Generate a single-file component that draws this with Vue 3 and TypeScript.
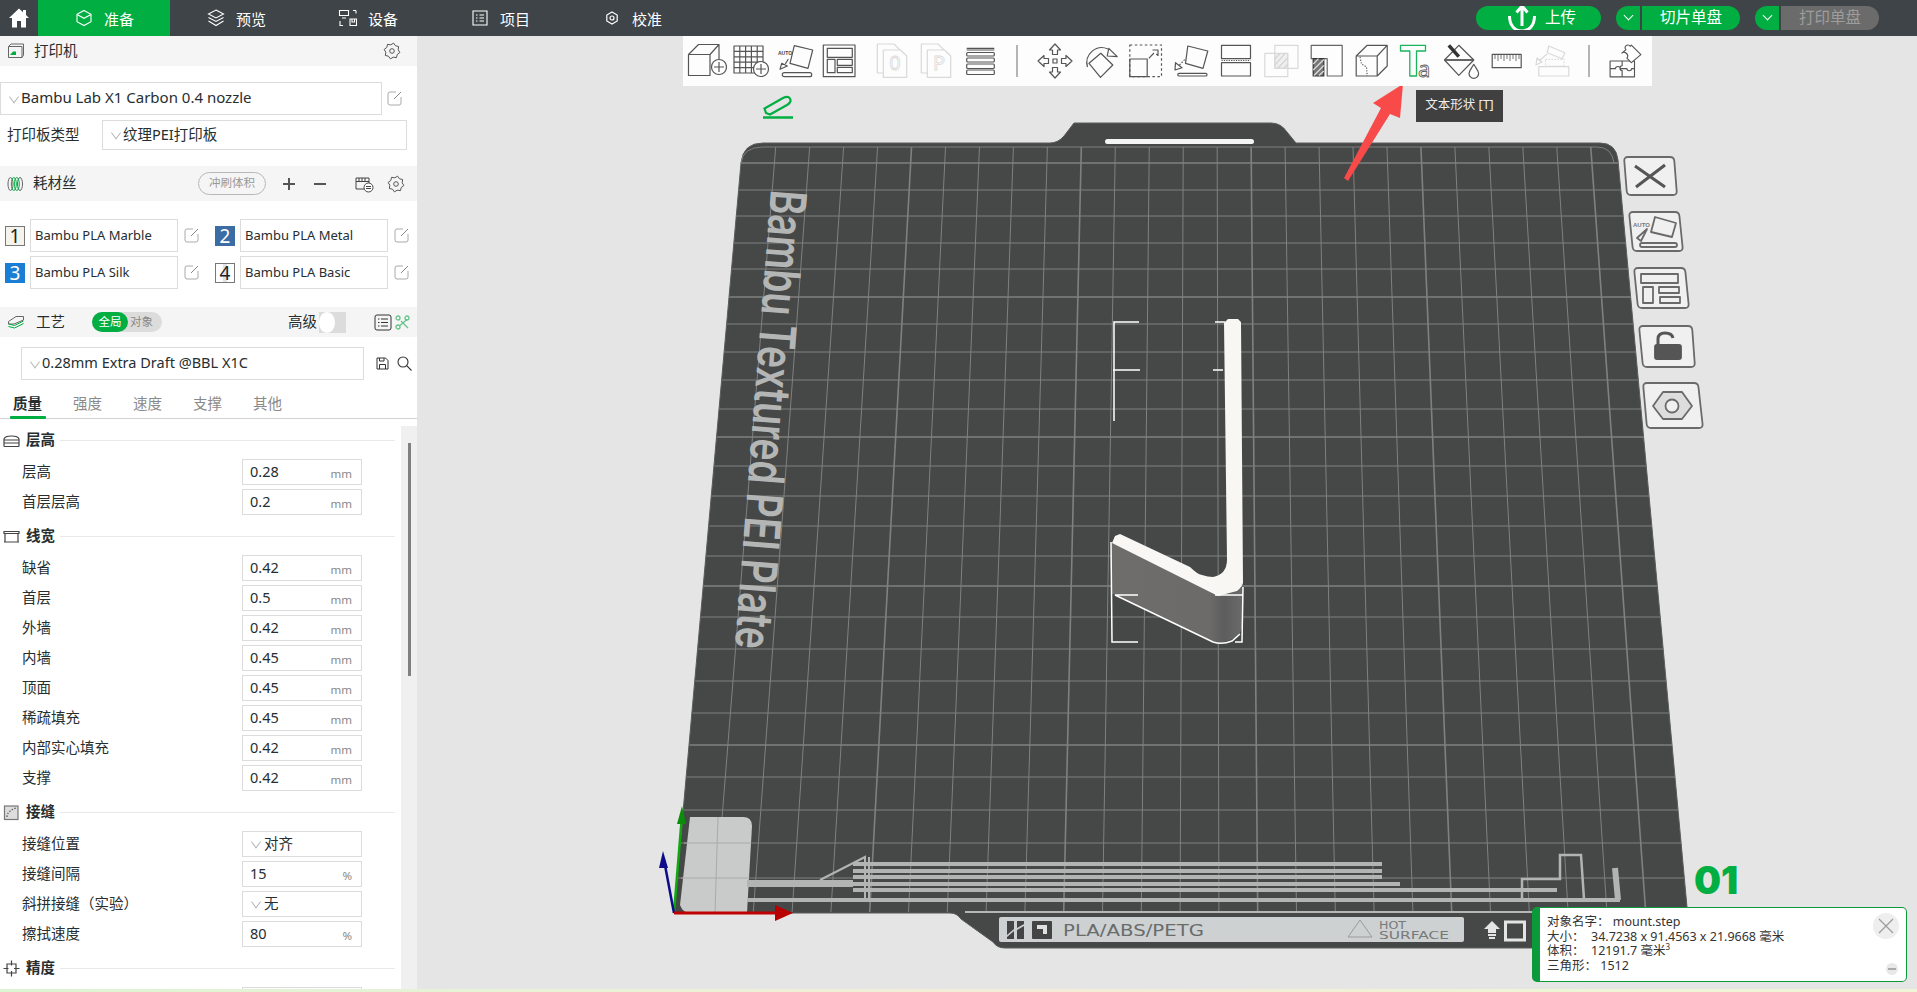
<template>
  <div class="app">
    <header class="topbar">
      <div class="home">
        <svg width="22" height="22" viewBox="0 0 22 22"><path d="M11 1.500L1 11h3v9.500h5v-6.500h4v6.500h5V11h3l-3-2.900V3h-3v2.200z" fill="#fff" /></svg>
      </div>
      <div class="nav active">
        <svg width="20" height="20" viewBox="0 0 20 20" fill="none" stroke="#fff" stroke-width="1.100"><path d="M10 2.500l7 3.800v7.400l-7 3.800-7-3.800V6.300z" /><path d="M3 6.500l7 3.800 7-3.800" /></svg>
        <span>准备</span>
      </div>
      <div class="nav">
        <svg width="20" height="20" viewBox="0 0 20 20" fill="none" stroke="#fff" stroke-width="1.100"><path d="M10 2l7.500 4-7.500 4-7.500-4z" /><path d="M2.500 9.500l7.500 4 7.500-4M2.500 13l7.500 4.500 7.500-4.500" /></svg>
        <span>预览</span>
      </div>
      <div class="nav">
        <svg width="20" height="20" viewBox="0 0 20 20" fill="none" stroke="#fff" stroke-width="1.100"><path d="M1.500 2.500h9v5h-9zM4 10h4M18 2.500h-3M18 2.500v3M2 13v4.500h3M12 11h6.500v6.500H12zM14 11v3h2.500v-3" /></svg>
        <span>设备</span>
      </div>
      <div class="nav">
        <svg width="20" height="20" viewBox="0 0 20 20" fill="none" stroke="#fff" stroke-width="1.100"><path d="M3 3h14v14H3zM6 7h1.500M9.500 7H14M6 10h1.500M9.500 10H14M6 13h1.500M9.500 13H14" /></svg>
        <span>项目</span>
      </div>
      <div class="nav">
        <svg width="20" height="20" viewBox="0 0 20 20" fill="none" stroke="#fff" stroke-width="1.200"><path d="M10 4l5.200 3v6L10 16l-5.200-3V7z" /><circle cx="10" cy="10" r="2" /></svg>
        <span>校准</span>
      </div>
      <div class="actions">
        <div class="btn upload">
          <svg width="30" height="30" viewBox="0 0 30 30" fill="none" stroke="#fff" stroke-width="3"><path d="M15 23V4M9.500 9.500L15 3l5.500 6.500" /><path d="M2.500 13c0 9 5 15 12.500 15s12.500-6 12.500-15" /></svg>
          <span>上传</span>
        </div>
        <div class="split">
          <div class="arrow"><i class="vee"></i></div>
          <div class="main">切片单盘</div>
        </div>
        <div class="split print">
          <div class="arrow"><i class="vee"></i></div>
          <div class="main off">打印单盘</div>
        </div>
      </div>
    </header>

    <div class="work">
      <aside class="side">
        <div class="head h30">
          <svg class="hicon" width="18" height="18" viewBox="0 0 18 18" fill="none" stroke="#666"><path d="M1.500 4.500h13.500v11H1.500zM1.500 4.500L4 2h12.500v11L15 15.500" /><path d="M3 13h6V9.500H6z" fill="#00ae42" stroke="none" /></svg>
          <span class="htitle">打印机</span>
          <svg class="gear right1" width="18" height="18" viewBox="0 0 18 18"><path :d="gearPath" /><circle cx="9" cy="9" r="2.300" /></svg>
        </div>
        <div class="printer">
          <div class="select wide33"><i class="chev"></i><span>Bambu Lab X1 Carbon 0.4 nozzle</span></div>
          <svg class="edit" width="15" height="15" viewBox="0 0 15 15"><path d="M9 1H3Q1 1 1 3V12Q1 14 3 14H12Q14 14 14 12V6" stroke="#aaa" /><path d="M7 8L14 1" stroke="#888" /></svg>
        </div>
        <div class="plate-type">
          <span class="ptlabel">打印板类型</span>
          <div class="select pt"><i class="chev"></i><span>纹理PEI打印板</span></div>
        </div>

        <div class="head h35">
          <svg class="hicon" width="17" height="16" viewBox="0 0 17 16" fill="none" stroke="#666"><ellipse cx="3.500" cy="8" rx="2.500" ry="6.500" /><ellipse cx="13" cy="8" rx="2.500" ry="6.500" /><ellipse cx="6.800" cy="8" rx="2.500" ry="6.500" stroke="#00ae42" /><ellipse cx="9.800" cy="8" rx="2.500" ry="6.500" stroke="#00ae42" /></svg>
          <span class="htitle">耗材丝</span>
          <span class="flush">冲刷体积</span>
          <i class="pm plus"></i>
          <i class="pm minus"></i>
          <svg class="sync" width="19" height="18" viewBox="0 0 19 18" fill="none" stroke="#444"><path d="M1 3h13v11H1zM1 6.500h13M4 3v3.500M7 3v3.500M10 3v3.500" /><circle cx="13.500" cy="12.500" r="4.500" fill="#fff" /><path d="M11 11.500h5M11 13.500h5" /></svg>
          <svg class="gear" width="18" height="18" viewBox="0 0 18 18"><path :d="gearPath" /><circle cx="9" cy="9" r="2.300" /></svg>
        </div>
        <div class="filaments">
          <div v-for="f in filaments" :key="f.id" class="filament">
            <span class="chip" :class="f.cls">{{ f.id }}</span>
            <div class="finput">{{ f.name }}</div>
            <svg class="edit" width="15" height="15" viewBox="0 0 15 15"><path d="M9 1H3Q1 1 1 3V12Q1 14 3 14H12Q14 14 14 12V6" stroke="#aaa" /><path d="M7 8L14 1" stroke="#888" /></svg>
          </div>
        </div>

        <div class="head h30 process">
          <svg class="hicon" width="18" height="18" viewBox="0 0 18 18" fill="none"><path d="M1.500 8.500L9 3.500h7.500v3.500L7 11H1.500z" stroke="#666" /><path d="M1.500 11l6 1.500L16.500 8M1.500 13.500l6 1.500L16.500 10.500" stroke="#00ae42" /></svg>
          <span class="htitle gy">工艺</span>
          <div class="seg"><span class="on">全局</span><span class="offseg">对象</span></div>
          <span class="adv">高级</span>
          <div class="toggle"><i></i></div>
          <svg class="listic" width="18" height="17" viewBox="0 0 18 17" fill="none" stroke="#333"><rect x="1" y="1" width="16" height="15" rx="2" /><path d="M4 5h1.500M7 5h7M4 8.500h1.500M7 8.500h7M4 12h1.500M7 12h7" /></svg>
          <svg class="cutic" width="15" height="15" viewBox="0 0 15 15" fill="none" stroke="#67c48a" stroke-width="1.300"><circle cx="3" cy="3" r="2" /><circle cx="12" cy="3" r="2" /><circle cx="3" cy="12" r="2" /><path d="M5 10.500l7-6M6 6l7 7" /></svg>
        </div>
        <div class="preset">
          <div class="select pre"><i class="chev"></i><span>0.28mm Extra Draft @BBL X1C</span></div>
          <svg class="save" width="13" height="13" viewBox="0 0 13 13" fill="none" stroke="#333"><path d="M1 1h8.500L12 3.500V12H1zM3.500 1v3h4.500V1M3.500 12V7.500h6V12" /></svg>
          <svg class="search" width="15" height="15" viewBox="0 0 15 15" fill="none" stroke="#333" stroke-width="1.100"><circle cx="6" cy="6" r="5" /><path d="M9.700 9.700L14.500 14.500" /></svg>
        </div>
        <div class="tabs">
          <span v-for="(t, i) in tabs" :key="t" class="tab" :class="{ cur: i === 0 }">{{ t }}</span>
        </div>

        <div class="params">
          <div class="plist">
            <section v-for="s in sections" :key="s.title" class="group">
              <div class="gtitle">
                <svg class="gicon" width="17" height="17" viewBox="0 0 17 17" fill="none" stroke="#444" stroke-width="1.200">
                  <path v-if="s.icon === 'layer'" d="M1 14.500h15M1 11h15M1 8h15M1 14.500V7c1-4 14-4 15 0v7.500" />
                  <path v-else-if="s.icon === 'width'" d="M1 3.500h15v2H1zM1 14h15M2 6v8M15 6v8" />
                  <template v-else-if="s.icon === 'seam'">
                    <rect x="1.500" y="2" width="13.500" height="13.500" fill="#ddd" stroke="#777" />
                    <path d="M4 13c0-4 3-7 9-9" stroke="#555" stroke-dasharray="1.500 1.500" />
                  </template>
                  <path v-else d="M4 4h9v9H4zM8.500 0.500v5M8.500 11v5.500M0.500 8.500h5M11 8.500h5.500" />
                </svg>
                <b>{{ s.title }}</b>
                <i class="rule"></i>
              </div>
              <div v-for="r in s.rows" :key="r.label" class="prow">
                <span class="plabel">{{ r.label }}</span>
                <div class="pbox">
                  <i v-if="r.option" class="chev small"></i>
                  <span class="pval" :class="{ opt: r.option }">{{ r.value }}</span>
                  <span v-if="r.unit" class="punit">{{ r.unit }}</span>
                </div>
              </div>
            </section>
          </div>
          <div class="track"><i></i></div>
        </div>
      </aside>

      <main class="canvas">
        <svg class="scene" width="1500" height="953" viewBox="417 36 1500 953">
          <defs>
            <linearGradient id="front" x1="0" x2="1" y1="0" y2="0">
              <stop offset="0" stop-color="#6f6d6b" />
              <stop offset="0.74" stop-color="#6d6b69" />
              <stop offset="0.86" stop-color="#5d5d5d" />
              <stop offset="1" stop-color="#6b6b6b" />
            </linearGradient>
          </defs>
          <path d="M741 163Q743 143 763 143H1050Q1058 143 1064 136L1074 123Q1079 123 1090 123H1271Q1281 123 1287 132L1296 143H1600Q1616 143 1618 160L1687 907L1690 948H1005Q997 948 993 942L961 919Q957 913 950 913H674Z" fill="#464847" stroke="#5a5c5c" />
          <path d="M741 163Q743 147 763 147H1597Q1612 147 1614 163" fill="none" stroke="#7c7e7e" />
          <rect x="1105" y="139" width="149" height="5" rx="2.500" fill="#f4f4f4" />
          <g stroke="#7f8181">
            <line v-for="l in vLines" :key="'v' + l.x1" :x1="l.x1" y1="147" :x2="l.x2" y2="912" :stroke-width="l.w" />
            <line v-for="l in hLines" :key="'h' + l.y" :x1="l.x1" :y1="l.y" :x2="l.x2" :y2="l.y" :stroke-width="l.w" />
          </g>

          <text x="771" y="189" transform="rotate(94.5 771 189)" class="bedtext" textLength="460" lengthAdjust="spacingAndGlyphs">Bambu Textured PEI Plate</text>

          <path d="M690 817H743Q752 817 752 826L747 913H690Q683 913 680 905Z" fill="#c9cbcb" />
          <path d="M684 843H751M681 878H749M718 817L715 913" stroke="#a9abab" fill="none" />

          <g fill="#b2b4b4">
            <rect x="853" y="862" width="529" height="4" />
            <rect x="853" y="869" width="529" height="4" />
            <rect x="853" y="875" width="529" height="4" />
            <rect x="853" y="882" width="547" height="4" />
            <rect x="747" y="880" width="106" height="7" />
            <rect x="853" y="888" width="704" height="4" />
            <rect x="747" y="898" width="873" height="4" />
          </g>
          <path d="M820 880L865 857V900M869 857V900" fill="none" stroke="#b2b4b4" stroke-width="2" />
          <path d="M1522 899V879H1560V855H1581L1584 899" fill="none" stroke="#b2b4b4" stroke-width="2.500" />
          <path d="M1615 868L1618 900" fill="none" stroke="#b2b4b4" stroke-width="6" />
          <line x1="965" y1="912" x2="1690" y2="912" stroke="#b5b7b7" stroke-width="2" />

          <rect x="999" y="917" width="465" height="25" rx="2" fill="#cdd1d2" />
          <path d="M1007 921h7v8l-7 6zM1007 937l7-6v8h-7zM1017 921h7v18h-7v-9l7-4v-2l-7 4z" fill="#444" />
          <rect x="1032" y="921" width="20" height="18" rx="1" fill="#444" />
          <path d="M1037 925h10v9h-4v-5h-6z" fill="#dfe1e1" />
          <text x="1063" y="936" class="strip" textLength="141" lengthAdjust="spacingAndGlyphs">PLA/ABS/PETG</text>
          <path d="M1360 920L1348 937H1372Z" fill="none" stroke="#9a9c9c" />
          <text x="1379" y="929" class="hot" textLength="27" lengthAdjust="spacingAndGlyphs">HOT</text>
          <text x="1379" y="938.500" class="hot" textLength="70" lengthAdjust="spacingAndGlyphs">SURFACE</text>
          <path d="M1492 921L1484 929H1488V933H1496V929H1500Z M1488 934h8v2h-8zM1489 937h6v2h-6z" fill="#e4e4e4" />
          <rect x="1505.500" y="922" width="19" height="18" fill="none" stroke="#e4e4e4" stroke-width="3" />

          <path d="M1111 542L1217 595L1243 587L1242 627Q1240 635 1235 638L1222 643L1213 642L1111 593Z" fill="url(#front)" />
          <path d="M1224 323L1228 319H1238L1241 322L1243 583Q1242 587 1237 591L1218 596L1112 543L1115 536L1120 534L1190 567Q1197 574 1202 575Q1208 577 1213 577Q1219 576 1223 572Q1227 567 1227 560Z" fill="#f9f7f4" />
          <g fill="none" stroke="#fff" stroke-width="1.500">
            <path d="M1139 322H1114V421M1113 370H1140M1215 322H1225M1213 370H1223" />
            <path d="M1111 542L1112 642H1138M1138 595H1115L1213 642Q1222 645 1232 641L1240 634M1215 595H1243M1243 587L1242 642H1235" />
          </g>

          <path d="M674 913L682 815" stroke="#0fa80f" stroke-width="2.500" />
          <path d="M682 806L677 824H686Z" fill="#0c8c0c" />
          <path d="M674 913L664 860" stroke="#0c0c8a" stroke-width="2.500" />
          <path d="M663 851L659 868H668Z" fill="#0c0c8a" />
          <path d="M674 913H778" stroke="#c00000" stroke-width="3" />
          <path d="M793 913L775 905V921Z" fill="#b80000" />

          <g class="pbtn">
            <path :d="quad([1624, 157], [1674, 157], [1677, 195], [1627, 195])" />
            <path class="bold" d="M1635 166L1665 187M1665 165L1636 187" />
          </g>
          <g class="pbtn">
            <path :d="quad([1629, 212], [1679, 212], [1683, 251], [1633, 251])" />
            <path d="M1655 217L1676 223L1672 237L1651 232Z" />
            <rect x="1640" y="243" width="37" height="4" rx="2" />
            <text x="1633" y="227" class="mini">AUTO</text>
            <path d="M1637 238L1647 229L1641 241Z" />
          </g>
          <g class="pbtn">
            <path :d="quad([1634, 268], [1685, 268], [1689, 308], [1638, 308])" />
            <path d="M1641 274H1678V283H1641ZM1643 287H1653V303H1643ZM1659 287H1679V293H1659ZM1660 297H1680V303H1660Z" />
          </g>
          <g class="pbtn">
            <path :d="quad([1639, 326], [1692, 326], [1695, 367], [1643, 367])" />
            <rect class="solid" x="1655" y="345" width="26" height="14" rx="2" />
            <path class="bold" d="M1658 345V339Q1658 333 1665 333Q1672 333 1673 338" />
          </g>
          <g class="pbtn">
            <path :d="quad([1643, 383], [1698, 383], [1703, 428], [1647, 428])" />
            <path class="hex" d="M1653 406L1663 392H1682L1692 406L1682 419H1663Z" />
            <circle cx="1672" cy="406" r="6.500" />
          </g>

          <text x="1694" y="894" class="plateno">01</text>

          <path d="M766 113L764.500 108.500L783 98Q788 95.500 790 98.500Q792 102 787 105L770 114.500Z" fill="none" stroke="#00ae42" stroke-width="2.200" />
          <path d="M763 117.500H793" stroke="#00ae42" stroke-width="2.500" />

          <path d="M1403 84L1373 103L1381 108L1344 178L1348 181L1390 114L1400 118Z" fill="#f94a4a" />
        </svg>

        <div class="toolbar">
          <div class="tool">
            <svg viewBox="0 0 40 40"><path d="M1.500 13.500H23V34.500H1.500ZM1.500 13.500L11.500 3.500H32L23 13.500M23 13.500V20M32 3.500V20" /><circle cx="32" cy="26" r="7.500" fill="#fff" /><path d="M32 21V31M27 26H37" /></svg>
          </div>
          <div class="tool">
            <svg viewBox="0 0 40 40"><path d="M3 5H32V32H3ZM8.800 5V32M14.600 5V32M20.400 5V32M26.200 5V32M3 10.400H32M3 15.800H32M3 21.200H32M3 26.600H32" /><circle cx="30" cy="28" r="7.500" fill="#fff" /><path d="M30 23V33M25 28H35" /></svg>
          </div>
          <div class="tool">
            <svg viewBox="0 0 40 40"><path d="M19.300 4.700L37.700 9L33 27.300L15 22.300Z" /><rect x="7.300" y="31.700" width="29.400" height="4" rx="2" /><path d="M5 28.300L6.700 22.300L12.300 25Z" /><path d="M10.300 23L13.300 18" /><text x="3" y="14" class="auto">AUTO</text></svg>
          </div>
          <div class="tool">
            <svg viewBox="0 0 40 40"><path d="M4.300 4H36V35.700H4.300ZM8.300 7.300H33.300V16.300H8.300ZM8.300 18.300H16V31.700H8.300ZM18.300 18.300H33.300V24.300H18.300ZM18.300 26.300H33.300V31.700H18.300Z" /></svg>
          </div>
          <div class="tool gap9 faded">
            <svg viewBox="0 0 40 40"><path d="M11 32H5.300V3H22L28 9M11.300 9H28.500L34.700 15V36.300H11.300Z" /><text x="23" y="28.500" class="docl">0</text></svg>
          </div>
          <div class="tool faded">
            <svg viewBox="0 0 40 40"><path d="M11 32H5.300V3H22L28 9M11.300 9H28.500L34.700 15V36.300H11.300Z" /><text x="23" y="28.500" class="docl">P</text></svg>
          </div>
          <div class="tool">
            <svg viewBox="0 0 40 40"><path d="M6.700 7.300H34.300M6.700 9H34.300" /><rect x="6.700" y="11.500" width="27.600" height="3.500" rx="1" /><rect x="6.700" y="17" width="27.600" height="4" rx="1" /><rect x="6.700" y="23" width="27.600" height="4.500" rx="1" /><rect x="6.700" y="29" width="27.600" height="4.500" rx="1" /></svg>
          </div>
          <i class="tsep"></i>
          <div class="tool wide">
            <svg viewBox="0 0 40 40">
              <g v-for="a in [0, 90, 180, 270]" :key="a" :transform="`rotate(${a} 20 20)`"><path d="M20 3L14.500 9H17.500V13.500H22.500V9H25.500Z" /></g>
              <rect x="18" y="18" width="4" height="4" />
            </svg>
          </div>
          <div class="tool wide">
            <svg viewBox="0 0 40 40"><path d="M9 22.300L20.800 12.300L32.800 24L20.500 36.300Z" /><path d="M7.500 26A15 15 0 0 1 28 8" /><path d="M28.800 7.300L37.200 15.700L27.200 15Z" /></svg>
          </div>
          <div class="tool wide">
            <svg viewBox="0 0 40 40"><path d="M4.800 4H36.500V35.700H4.800Z" stroke-dasharray="2.500 2.500" /><path d="M4.800 18H22.200V35.700H4.800Z" /><path d="M23.800 17.300L29 12M27.500 9H33V14.500L31.300 13" /></svg>
          </div>
          <div class="tool wide">
            <svg viewBox="0 0 40 40"><path d="M17.800 5L37.800 10L33 27.300L15.500 22.300Z" /><rect x="7.800" y="32.300" width="29.200" height="2.700" rx="1.300" /><path d="M5 29L5.500 21.700L12 26.700Z" /><path d="M9.500 24L15.500 17.700" stroke-dasharray="1.500 1.500" /></svg>
          </div>
          <div class="tool wide">
            <svg viewBox="0 0 40 40"><path d="M6.500 4.300H35.500V17.700H6.500ZM6.500 21.700H35.500V35H6.500Z" /><path d="M6.500 19.500H35.500" stroke-dasharray="1.200 1.200" /></svg>
          </div>
          <div class="tool wide faded">
            <svg viewBox="0 0 40 40"><path d="M14.800 4.300H38V27.300H14.800ZM4.800 12.300H27.800V35.700H4.800Z" /><path d="M15 12.500H27.600V27H15Z" fill="#efefef" /><path d="M15 18L20 12.500M15 24L25 12.500M18 27L27.600 17M24 27L27.600 23" stroke="#d5d5d5" /></svg>
          </div>
          <div class="tool wide">
            <svg viewBox="0 0 40 40"><path d="M6.200 17.700V4.300H37.200V35H22.200V17.700Z" stroke="#666" /><path d="M8.200 17.700H18.800V35H8.200Z" fill="#777" stroke="#333" /><path d="M8.200 23L13.500 17.700M8.200 29L18.800 18.500M9 34.500L18.800 24.500M14 34.500L18.800 30" stroke="#ddd" /></svg>
          </div>
          <div class="tool wide">
            <svg viewBox="0 0 40 40"><path d="M6.200 15H27.200V35H6.200ZM6.200 15L17.200 4.300H37.200L27.200 15M37.200 4.300V25L27.200 35M27.200 15V35" /><path d="M10 16L11.500 23L16.500 26L17.200 35" stroke-dasharray="1.200 1.500" /></svg>
          </div>
          <div class="tool wide">
            <svg viewBox="0 0 40 40"><path d="M5.500 4.300H30.500V10H21.500V35H14.800V10H5.500Z" stroke="#19b45c" stroke-width="1.300" /><text x="23" y="36" class="ta">a</text></svg>
          </div>
          <div class="tool wide">
            <svg viewBox="0 0 40 40"><path d="M4.500 19L18.800 4.300L33.800 19L18.800 34.300Z" /><path d="M4.500 19H33.800" stroke-width="1.800" /><path d="M8.800 4.300L18.800 15.700" stroke-width="3.500" stroke="#333" /><path d="M33.800 23.300C31 28 29 30 29 32.500A4.800 4.800 0 0 0 38.600 32.500C38.600 30 36.500 28 33.800 23.300Z" /></svg>
          </div>
          <div class="tool wide">
            <svg viewBox="0 0 40 40"><path d="M7.200 13.300H36.200V26.700H7.200Z" /><path d="M10 13.300V18M13 13.300V20M16 13.300V18M19 13.300V20M22 13.300V18M25 13.300V20M28 13.300V18M31 13.300V20M34 13.300V18" stroke-width="0.800" /></svg>
          </div>
          <div class="tool wide faded">
            <svg viewBox="0 0 40 40"><path d="M18.800 5L34.800 11.700L32.200 17.700L17.200 11.700ZM8.800 25.700H38.800V35H8.800Z" /><path d="M15.500 18.300H34V25H15.500Z" stroke-dasharray="1.500 1.500" /><path d="M6 24L7 17L12 21ZM9 20L17 13" /></svg>
          </div>
          <i class="tsep s2"></i>
          <div class="tool puzzle">
            <svg viewBox="0 0 40 40"><path d="M4.300 20H30V36.700H4.300Z" /><path d="M4.300 28H10C10 25 15 25 15 28H17M17 20V25C14 25 14 30 17 30V36.700M17 28H22C22 31 27 31 27 28H30" /><path d="M16.700 11.700L21 8C18 5 23 1 25.500 4.500L26.700 3.300L36.700 13.300L26.700 21.700L22 17C25 13 19 9 16.700 11.700Z" fill="#fff" /></svg>
          </div>
        </div>

        <div class="tip">文本形状 [T]</div>

        <div class="info">
          <div class="infotext">
            <div>对象名字： mount.step</div>
            <div>大小： &nbsp;34.7238 x 91.4563 x 21.9668 毫米</div>
            <div>体积： &nbsp;12191.7 毫米<sup>3</sup></div>
            <div>三角形： 1512</div>
          </div>
          <div class="close">
            <svg width="16" height="16" viewBox="0 0 16 16" stroke="#9a9a9a" stroke-width="1.200"><path d="M1 1L15 15M15 1L1 15" /></svg>
          </div>
          <div class="fold"><i></i></div>
        </div>
      </main>
    </div>
    <div class="strip-bottom"></div>
  </div>
</template>

<script setup lang="ts">
interface Row {
  label: string
  value: string
  unit?: string
  option?: boolean
}

interface Section {
  title: string
  icon: string
  rows: Row[]
}

type Pt = [number, number]

const filaments = [
  { id: 1, name: 'Bambu PLA Marble', cls: 'c1' },
  { id: 2, name: 'Bambu PLA Metal', cls: 'c2' },
  { id: 3, name: 'Bambu PLA Silk', cls: 'c3' },
  { id: 4, name: 'Bambu PLA Basic', cls: 'c4' },
]

const tabs = ['质量', '强度', '速度', '支撑', '其他']

const sections: Section[] = [
  {
    title: '层高',
    icon: 'layer',
    rows: [
      { label: '层高', value: '0.28', unit: 'mm' },
      { label: '首层层高', value: '0.2', unit: 'mm' },
    ],
  },
  {
    title: '线宽',
    icon: 'width',
    rows: [
      { label: '缺省', value: '0.42', unit: 'mm' },
      { label: '首层', value: '0.5', unit: 'mm' },
      { label: '外墙', value: '0.42', unit: 'mm' },
      { label: '内墙', value: '0.45', unit: 'mm' },
      { label: '顶面', value: '0.45', unit: 'mm' },
      { label: '稀疏填充', value: '0.45', unit: 'mm' },
      { label: '内部实心填充', value: '0.42', unit: 'mm' },
      { label: '支撑', value: '0.42', unit: 'mm' },
    ],
  },
  {
    title: '接缝',
    icon: 'seam',
    rows: [
      { label: '接缝位置', value: '对齐', option: true },
      { label: '接缝间隔', value: '15', unit: '%' },
      { label: '斜拼接缝（实验）', value: '无', option: true },
      { label: '擦拭速度', value: '80', unit: '%' },
    ],
  },
  {
    title: '精度',
    icon: 'precision',
    rows: [{ label: '', value: '' }],
  },
]

// bed grid, perspective taken from the screenshot
const vLines = Array.from({ length: 25 }, (_, i) => ({
  x1: 775.7 + 33.96 * i,
  x2: 714.5 + 38.8 * i,
  w: i % 5 === 4 ? 1.6 : 1,
}))

const rowY = [163, 190, 216, 243, 269, 297, 324, 352, 380, 409, 437, 466, 496, 526, 556, 586, 617, 649, 681, 713, 745, 777, 810, 843, 878]
const hLines = rowY.map((y, i) => ({
  y,
  x1: 741 - (y - 165) * 0.0885,
  x2: 1618 + (y - 160) * 0.0924,
  w: i % 5 === 0 ? 1.6 : 1,
}))

// eight toothed gear, alternates outer and inner radius
const gearPath = Array.from({ length: 16 }, (_, i) => {
  const a = (i * Math.PI) / 8 + Math.PI / 16
  const r = i % 2 === 0 ? 8 : 6.3
  return `${i === 0 ? 'M' : 'L'}${(9 + r * Math.cos(a)).toFixed(2)} ${(9 + r * Math.sin(a)).toFixed(2)}`
}).join('') + 'Z'

// four corner shape with rounded corners for the buttons beside the bed
function quad(...pts: Pt[]) {
  const r = 4
  let d = ''
  pts.forEach((p, i) => {
    const prev = pts[(i + 3) % 4]
    const next = pts[(i + 1) % 4]
    const toward = (q: Pt): Pt => {
      const len = Math.hypot(q[0] - p[0], q[1] - p[1])
      return [p[0] + ((q[0] - p[0]) / len) * r, p[1] + ((q[1] - p[1]) / len) * r]
    }
    const a = toward(prev)
    const b = toward(next)
    d += `${i === 0 ? 'M' : 'L'}${a[0]} ${a[1]}Q${p[0]} ${p[1]} ${b[0]} ${b[1]}`
  })
  return d + 'Z'
}
</script>

<style scoped>
.app {
  height: 992px;
  width: 1917px;
  overflow: hidden;
  display: flex;
  flex-direction: column;
  background: #e5e5e5;
  font-family: "Noto Sans", "Noto Sans CJK SC", sans-serif;
  color: #262e30;
}

.topbar {
  height: 36px;
  flex: none;
  display: flex;
  background: #3e4447;
  color: #fff;
}

.home {
  width: 38px;
  display: flex;
  align-items: center;
  justify-content: center;
}

.nav {
  width: 132px;
  display: flex;
  align-items: center;
  justify-content: center;
  gap: 10px;
  font-size: 15px;
}

.nav.active {
  background: #00ae42;
}

.actions {
  margin-left: auto;
  padding: 6px 38px 0 0;
  display: flex;
  gap: 15px;
}

.btn,
.split {
  height: 24px;
  display: flex;
  font-size: 15.5px;
  line-height: 23px;
}

.upload {
  width: 125px;
  background: #00ae42;
  border-radius: 12px;
  justify-content: center;
  gap: 8px;
  overflow: hidden;
  padding-left: 6px;
  box-sizing: border-box;
}

.upload svg {
  margin-top: -3px;
}

.split .arrow {
  width: 24px;
  background: #00ae42;
  border-radius: 12px 0 0 12px;
  margin-right: 2px;
  display: flex;
  justify-content: center;
}

.split .main {
  width: 98px;
  background: #00ae42;
  border-radius: 0 12px 12px 0;
  text-align: center;
}

.split .main.off {
  background: #6b6b6b;
  color: #9d9d9d;
}

.vee {
  width: 6px;
  height: 6px;
  margin-top: 6px;
  border-right: 1.5px solid #fff;
  border-bottom: 1.5px solid #fff;
  transform: rotate(45deg);
}

.work {
  flex: 1;
  display: flex;
  min-height: 0;
}

.side {
  width: 417px;
  flex: none;
  background: #fff;
  display: flex;
  flex-direction: column;
  overflow: hidden;
  font-size: 14.5px;
}

.head {
  background: #f5f5f5;
  display: flex;
  align-items: center;
  flex: none;
}

.h30 {
  height: 30px;
}

.h35 {
  height: 35px;
  margin-top: 16px;
}

.hicon {
  margin-left: 7px;
  flex: none;
}

.htitle {
  margin-left: 9px;
  width: 60px;
  padding-bottom: 4px;
  white-space: nowrap;
}

.gear {
  flex: none;
  margin-left: 13px;
  fill: none;
  stroke: #555;
  stroke-linejoin: round;
}

.right1 {
  margin-left: auto;
  margin-right: 16px;
}

.select {
  border: 1px solid #dcdcdc;
  box-sizing: border-box;
  display: flex;
  align-items: center;
  background: #fff;
}

.select span {
  padding-bottom: 4px;
}

.chev {
  width: 7px;
  height: 7px;
  border-right: 1px solid #b5b5b5;
  border-bottom: 1px solid #b5b5b5;
  transform: rotate(45deg) skew(8deg, 8deg);
  margin: -4px 3px 0 9px;
  flex: none;
}

.printer {
  margin-top: 16px;
  height: 33px;
  display: flex;
  align-items: center;
  flex: none;
}

.wide33 {
  width: 382px;
  height: 33px;
  font-size: 15px;
}

.edit {
  flex: none;
  margin-left: 5px;
  fill: none;
}

.plate-type {
  margin-top: 5px;
  height: 30px;
  display: flex;
  align-items: center;
  flex: none;
}

.ptlabel {
  margin-left: 7px;
  width: 95px;
  padding-bottom: 4px;
}

.select.pt {
  width: 305px;
  height: 30px;
}

.flush {
  margin-left: 105px;
  width: 68px;
  height: 23px;
  box-sizing: border-box;
  border: 1px solid #b8b8b8;
  border-radius: 12px;
  color: #999;
  font-size: 11.5px;
  line-height: 20px;
  text-align: center;
}

.pm {
  width: 12px;
  height: 2px;
  background: #555;
  position: relative;
  flex: none;
}

.plus {
  margin-left: 17px;
}

.plus::after {
  content: "";
  position: absolute;
  left: 5px;
  top: -5px;
  width: 2px;
  height: 12px;
  background: #555;
}

.minus {
  margin-left: 19px;
}

.sync {
  margin-left: 29px;
  flex: none;
}

.filaments {
  margin-top: 18px;
  display: grid;
  grid-template-columns: 210px 200px;
  row-gap: 4px;
  flex: none;
  font-size: 13px;
}

.filament {
  height: 33px;
  display: flex;
  align-items: center;
  padding-left: 5px;
}

.chip {
  width: 20px;
  height: 20px;
  box-sizing: border-box;
  font-size: 19px;
  line-height: 20px;
  text-align: center;
  color: #fff;
  flex: none;
}

.c1 {
  background: #f6f2ec;
  border: 1px solid #777;
  color: #222;
  line-height: 18px;
}

.c2 {
  background: #3b6ca3;
}

.c3 {
  background: #1a7fd4;
}

.c4 {
  background: linear-gradient(90deg, #fff 40%, #e2e2e2 40% 60%, #fff 60%);
  border: 1px solid #777;
  color: #222;
  line-height: 18px;
}

.finput {
  width: 148px;
  height: 33px;
  margin-left: 5px;
  box-sizing: border-box;
  border: 1px solid #dcdcdc;
  line-height: 30px;
  padding-left: 4px;
  flex: none;
}

.filament .edit {
  margin-left: 6px;
}

.process {
  margin-top: 18px;
}

.htitle.gy {
  width: 30px;
  margin-left: 11px;
}

.seg {
  margin-left: 26px;
  width: 70px;
  height: 20px;
  background: #dcdcdc;
  border-radius: 10px;
  display: flex;
  font-size: 11.5px;
  line-height: 19px;
}

.seg .on {
  width: 36px;
  background: #00ae42;
  color: #fff;
  border-radius: 10px;
  text-align: center;
}

.seg .offseg {
  margin-left: 2px;
  color: #888;
}

.adv {
  margin-left: 126px;
  padding-bottom: 4px;
}

.toggle {
  margin-left: 2px;
  width: 27px;
  height: 21px;
  background: #dcdcdc;
}

.toggle i {
  display: block;
  width: 16px;
  height: 21px;
  border-radius: 50%;
  background: #fff;
}

.listic {
  margin-left: 28px;
  flex: none;
}

.cutic {
  margin-left: 3px;
  flex: none;
}

.preset {
  margin-top: 10px;
  height: 33px;
  display: flex;
  align-items: center;
  padding-left: 21px;
  flex: none;
}

.select.pre {
  width: 343px;
  height: 33px;
}

.select.pre .chev {
  margin-right: 3px;
}

.save {
  margin-left: 12px;
  flex: none;
}

.search {
  margin-left: 8px;
  flex: none;
}

.tabs {
  height: 39px;
  flex: none;
  box-sizing: border-box;
  border-bottom: 1px solid #d2d2d2;
  display: flex;
  color: #8a8a8a;
  padding-left: 13px;
  gap: 30px;
  align-items: flex-start;
}

.tab {
  position: relative;
  padding-top: 12px;
  line-height: 22px;
  width: 30px;
  white-space: nowrap;
}

.tab.cur {
  color: #262e30;
  font-weight: 700;
}

.tab.cur::after {
  content: "";
  position: absolute;
  left: -3px;
  right: -3px;
  top: 36px;
  height: 2.5px;
  border-radius: 1px;
  background: #00ae42;
}

.params {
  flex: 1;
  display: flex;
  min-height: 0;
}

.plist {
  width: 401px;
  flex: none;
  box-sizing: border-box;
  padding: 0 6px 0 3px;
  overflow: hidden;
}

.group {
  margin-top: 9px;
}

.gtitle {
  height: 24px;
  display: flex;
  align-items: center;
  margin-bottom: 7px;
}

.gicon {
  flex: none;
}

.gtitle b {
  margin-left: 6px;
  font-weight: 700;
  padding-bottom: 4px;
}

.rule {
  flex: 1;
  height: 1px;
  background: #e8e8e8;
  margin-left: 5px;
}

.prow {
  height: 26px;
  margin-bottom: 4px;
  display: flex;
  align-items: center;
  padding: 0 33px 0 19px;
}

.plabel {
  white-space: nowrap;
  padding-bottom: 4px;
}

.pbox {
  margin-left: auto;
  width: 120px;
  height: 26px;
  box-sizing: border-box;
  border: 1px solid #dcdcdc;
  display: flex;
  align-items: center;
  padding: 0 9px 0 7px;
  flex: none;
}

.chev.small {
  margin: -4px 3px 0 2px;
}

.pval {
  line-height: 22px;
  padding-bottom: 2px;
}

.pval.opt {
  margin-left: 1px;
}

.punit {
  margin-left: auto;
  font-size: 11.5px;
  color: #888;
  padding-top: 3px;
}

.track {
  width: 16px;
  margin-top: 7px;
  background: #f0f0f0;
  flex: none;
}

.track i {
  display: block;
  width: 2.5px;
  height: 233px;
  margin: 17px 0 0 7px;
  background: #808080;
}

.canvas {
  flex: 1;
  position: relative;
}

.scene {
  position: absolute;
  left: 0;
  top: 0;
}

.bedtext {
  font: 600 50px Inter, "Liberation Sans", sans-serif;
  fill: #b4b6b6;
}

.strip {
  font: 400 15px "DejaVu Sans", sans-serif;
  fill: #6a6c6c;
}

.hot {
  font: 400 10.5px "DejaVu Sans", sans-serif;
  fill: #777979;
}

.pbtn path,
.pbtn rect,
.pbtn circle {
  fill: #f0f0f0;
  stroke: #6a6a6a;
  stroke-width: 1.8;
  stroke-linejoin: round;
}

.pbtn path.bold {
  fill: none;
  stroke: #555;
  stroke-width: 3;
}

.pbtn rect.solid {
  fill: #555;
  stroke: #555;
}

.pbtn path.hex {
  fill: #ddd;
}

.mini {
  font: 700 6px "Liberation Sans", sans-serif;
  fill: #777;
}

.plateno {
  font: 900 38px Inter, sans-serif;
  fill: #00ae42;
}

.toolbar {
  position: absolute;
  left: 266px;
  top: 0;
  width: 968.5px;
  height: 50px;
  box-sizing: border-box;
  padding-left: 2px;
  background: #fdfdfd;
  display: flex;
  align-items: center;
}

.tool {
  width: 44px;
  height: 40px;
  flex: none;
  display: flex;
  justify-content: center;
}

.tool.wide {
  width: 45px;
}

.tool.puzzle {
  width: 38px;
}

.tool.gap9 {
  margin-left: 9px;
}

.tool svg {
  width: 40px;
  height: 40px;
  fill: none;
  stroke: #555;
  stroke-width: 1.2;
  stroke-linejoin: round;
}

.tool.faded svg {
  stroke: #d9d9d9;
}

.auto {
  font: 700 5px "Liberation Sans", sans-serif;
  fill: #444;
  stroke: none;
}

.docl {
  font: 400 20px "Noto Sans", sans-serif;
  text-anchor: middle;
  fill: #fff;
  stroke: #d9d9d9;
  stroke-width: 0.8;
}

.ta {
  font: 400 22px "Noto Sans", sans-serif;
  fill: #fff;
  stroke: #555;
  stroke-width: 0.8;
}

.tsep {
  width: 30px;
  height: 32px;
  flex: none;
  position: relative;
}

.tsep::after {
  content: "";
  position: absolute;
  left: 14px;
  top: 0;
  width: 1.5px;
  height: 32px;
  background: #b4b4b4;
}

.tsep.s2 {
  width: 34px;
}

.tsep.s2::after {
  left: 16px;
}

.tip {
  position: absolute;
  left: 999px;
  top: 54px;
  width: 87px;
  height: 32px;
  background: #404040;
  color: #eee;
  font-size: 12.5px;
  line-height: 30px;
  text-align: center;
}

.info {
  position: absolute;
  left: 1115px;
  top: 871px;
  width: 375px;
  height: 75px;
  box-sizing: border-box;
  background: #fff;
  border: 1px solid #0a9a3a;
  border-left: 8px solid #0a9a3a;
  border-radius: 5px;
}

.infotext {
  margin: 7px 0 0 7px;
  font-size: 12.5px;
  line-height: 14.6px;
  color: #333;
  white-space: nowrap;
}

.infotext sup {
  font-size: 8px;
  line-height: 0;
}

.close {
  position: absolute;
  right: 7px;
  top: 5px;
  width: 26px;
  height: 26px;
  border-radius: 50%;
  background: #eee;
  display: flex;
  align-items: center;
  justify-content: center;
}

.fold {
  position: absolute;
  right: 8px;
  bottom: 6px;
  width: 12px;
  height: 12px;
  border-radius: 50%;
  background: #e8e8e8;
  display: flex;
  align-items: center;
  justify-content: center;
}

.fold i {
  width: 8px;
  height: 1.5px;
  background: #aaa;
}

.strip-bottom {
  height: 3px;
  flex: none;
  background: linear-gradient(90deg, #dcf5d2 0%, #eef0d8 40%, #f3ecd8 55%, #eef5d5 80%, #f0f5d8 100%);
}
</style>

<style>
body {
  margin: 0;
  overflow: hidden;
}
</style>
